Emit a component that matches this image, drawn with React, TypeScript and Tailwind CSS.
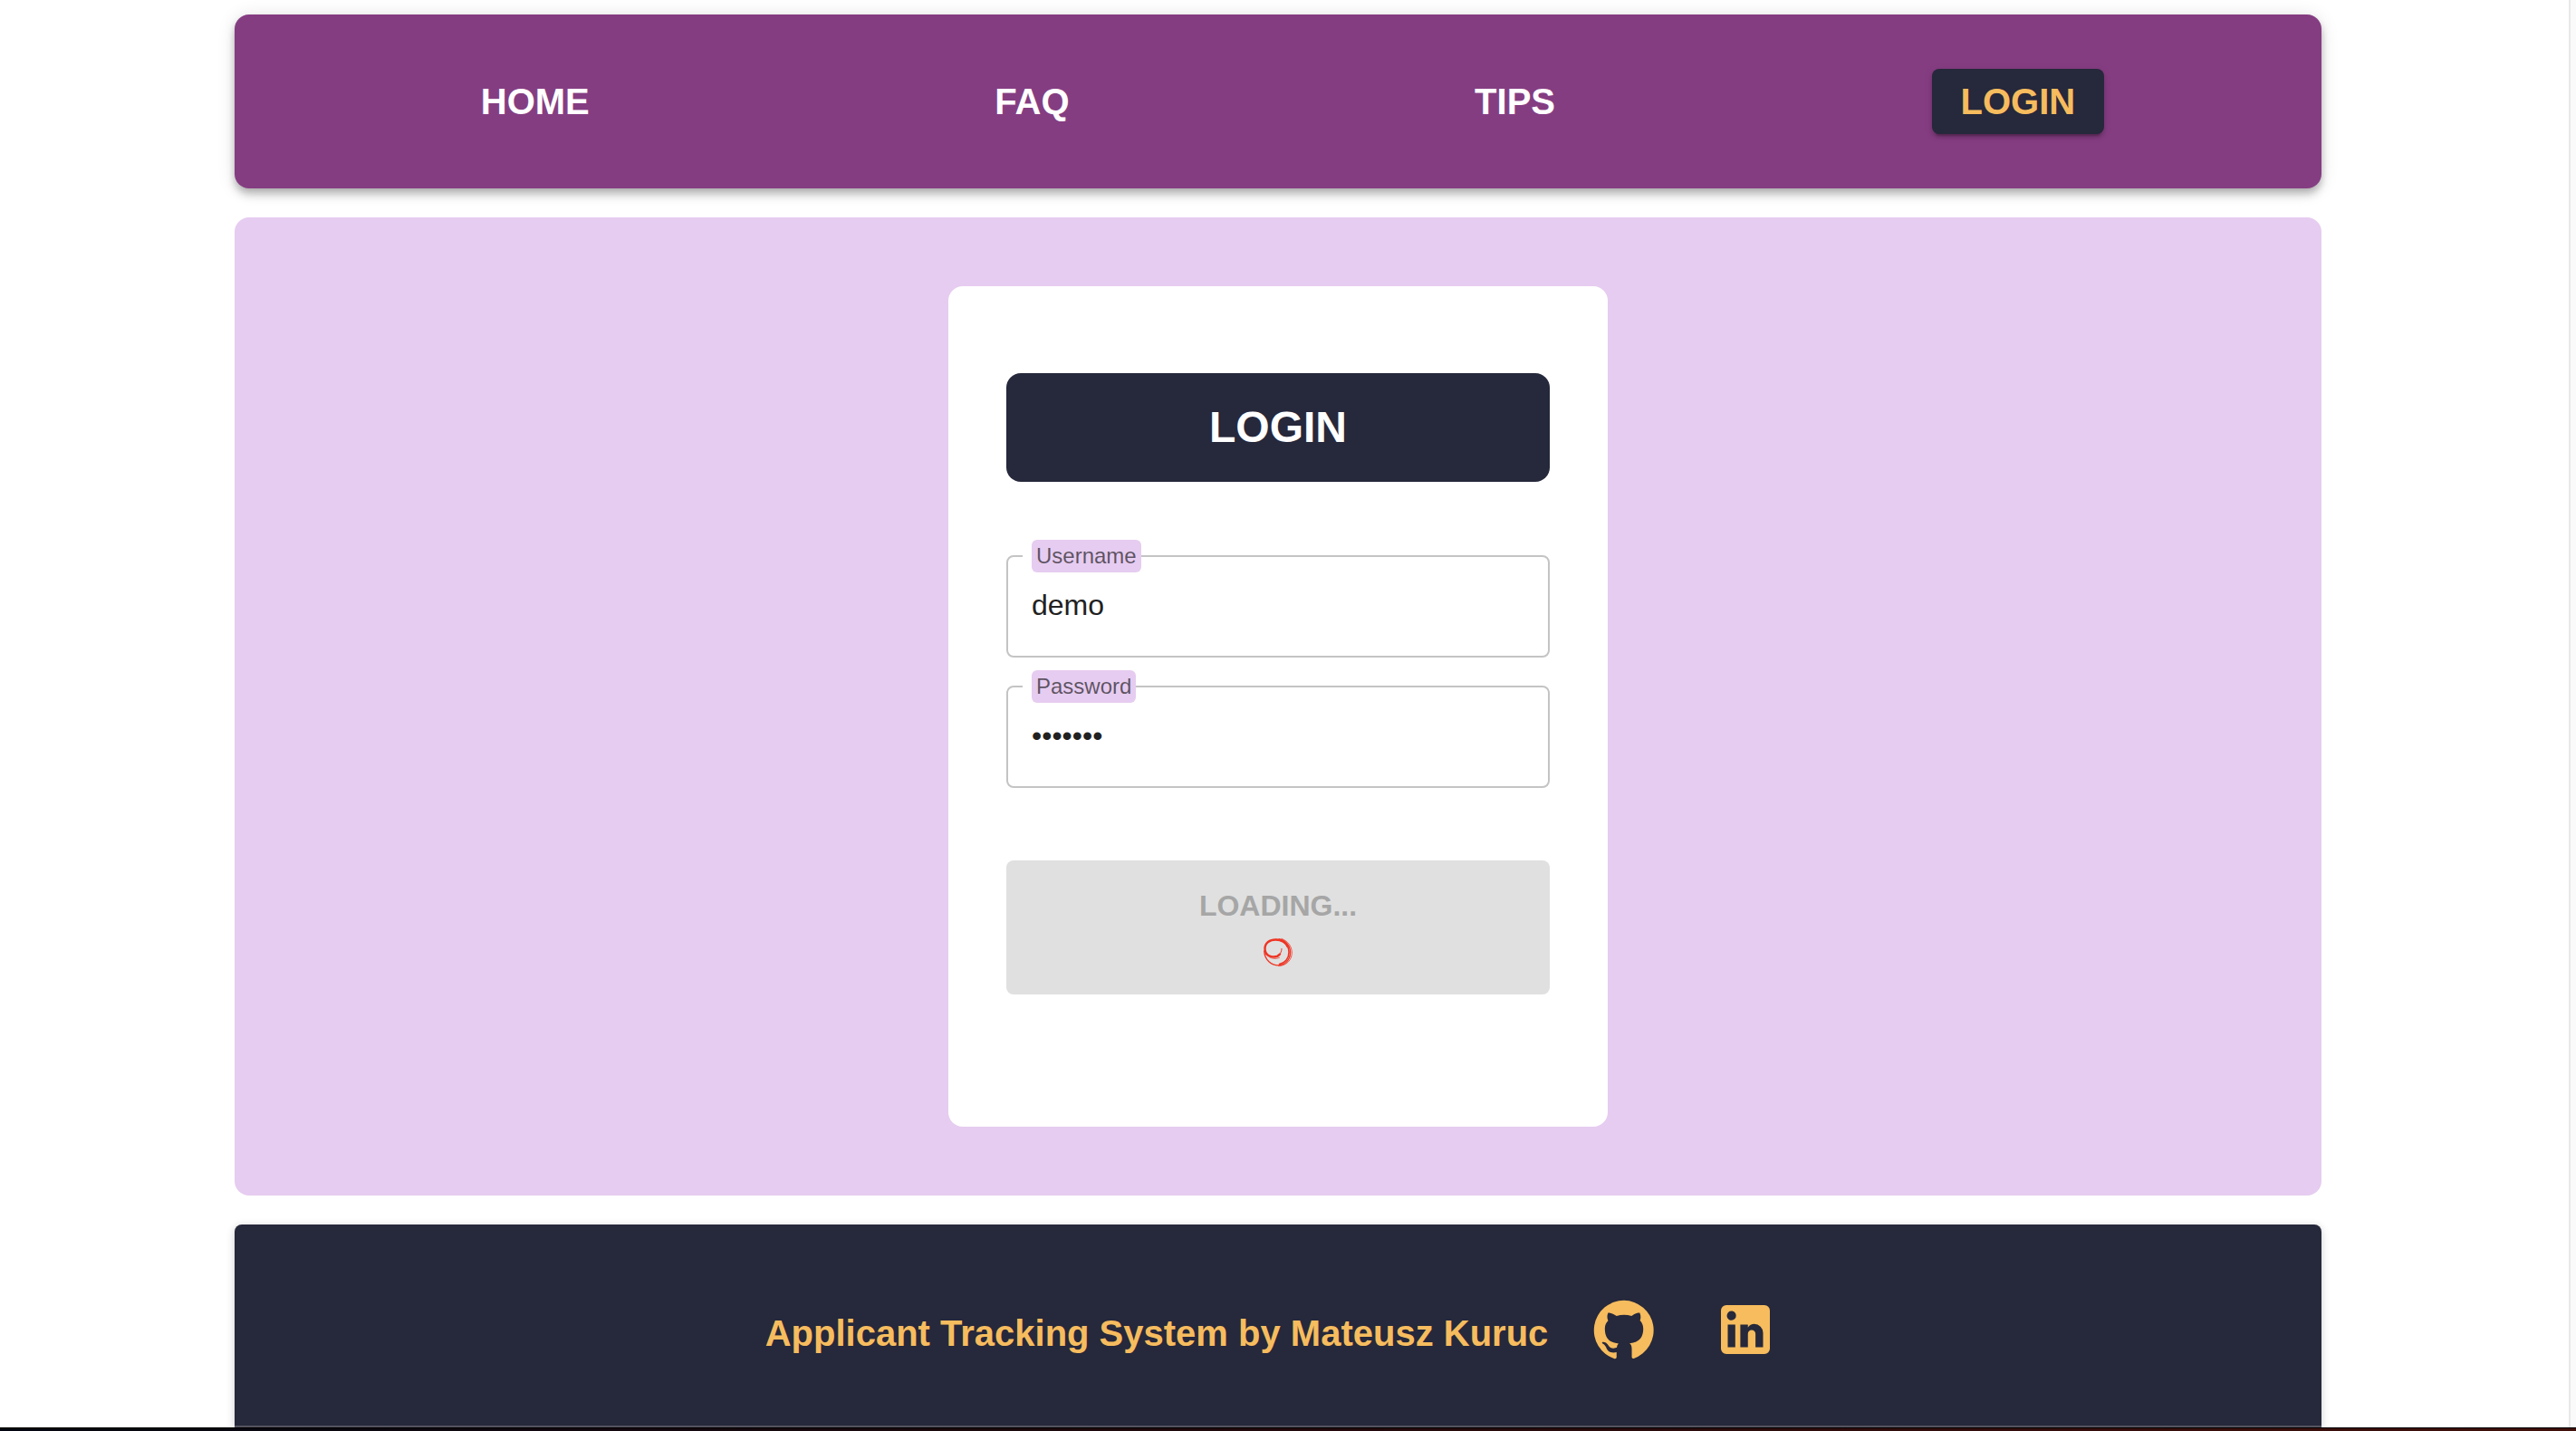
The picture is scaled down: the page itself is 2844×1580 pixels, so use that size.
import React from "react";

const links = ["HOME", "FAQ", "TIPS"];

function GitHubIcon() {
  return (
    <svg viewBox="0 0 24 24" fill="currentColor" className="size-[72px]" aria-hidden="true">
      <path d="M12 1.27a11 11 0 00-3.48 21.46c.55.09.73-.28.73-.55v-1.84c-3.03.64-3.67-1.46-3.67-1.46-.55-1.29-1.28-1.65-1.28-1.65-.92-.65.1-.65.1-.65 1.1 0 1.73 1.1 1.73 1.1.92 1.65 2.57 1.2 3.21.92a2 2 0 01.64-1.47c-2.47-.27-5.04-1.19-5.04-5.5 0-1.1.46-2.1 1.2-2.84a3.76 3.76 0 010-2.93s.91-.28 3.11 1.1c1.8-.49 3.7-.49 5.5 0 2.1-1.38 3.02-1.1 3.02-1.1a3.76 3.76 0 01.1 2.83c.74.74 1.2 1.74 1.2 2.94 0 4.21-2.57 5.13-5.04 5.4.45.37.82.92.82 2.02v3.03c0 .27.1.64.73.55A11 11 0 0012 1.27" />
    </svg>
  );
}

function LinkedInIcon() {
  return (
    <svg viewBox="0 0 24 24" fill="currentColor" className="size-[72px]" aria-hidden="true">
      <path d="M19 3a2 2 0 0 1 2 2v14a2 2 0 0 1-2 2H5a2 2 0 0 1-2-2V5a2 2 0 0 1 2-2h14m-.5 15.5v-5.3a3.26 3.26 0 0 0-3.26-3.26c-.85 0-1.84.52-2.32 1.3v-1.11h-2.79v8.37h2.79v-4.93c0-.77.62-1.4 1.39-1.4a1.4 1.4 0 0 1 1.4 1.4v4.93h2.79M6.88 8.56a1.68 1.68 0 0 0 1.68-1.68c0-.93-.75-1.69-1.68-1.69a1.69 1.69 0 0 0-1.69 1.69c0 .93.76 1.68 1.69 1.68m1.39 9.94v-8.37H5.5v8.37h2.77z" />
    </svg>
  );
}

function Spinner() {
  return (
    <svg viewBox="0 0 48 48" fill="none" stroke="#ee3524" strokeLinecap="round" className="size-12" aria-hidden="true">
      <path d="M28 19.500C28 25 24 28.500 19.500 28.500" strokeWidth="1" />
      <path d="M26 25.500C22 30.500 9.500 29.500 9.500 19.500C9.500 13 15 9.500 21.500 9.500C28 9.500 33 13 34.500 17" strokeWidth="2.400" />
      <path d="M14 28.500Q19.500 32 25.500 29.500" strokeWidth="0.700" />
      <path d="M22 9.500C31 10 36 16 36 23.500C36 30 32 35.500 25.500 36.500" strokeWidth="1.600" />
      <path d="M25 8.800C32 9.500 37.500 16 37.500 23.500C37.500 32 31.500 37.800 24.500 37.800C17 37.800 9 32 8.800 22" strokeWidth="1.300" />
      <path d="M28 8.500C35 11 39.300 17 39.300 24C39.300 31 34 38.500 24.500 38.500" strokeWidth="0.800" />
    </svg>
  );
}

function Field({ id, label, type, value }: { id: string; label: string; type: string; value: string }) {
  return (
    <fieldset className="h-[130px] rounded-lg border-2 border-[#c4c4c4] pl-4">
      <legend className="flex h-9 items-center bg-white pl-2.5">
        <label htmlFor={id} className="rounded-md bg-[#e6ccf0] px-[5px] py-1 text-2xl leading-7 text-black/60">
          {label}
        </label>
      </legend>
      <input
        id={id}
        type={type}
        defaultValue={value}
        className="mt-3 block h-12 w-full bg-transparent pl-2.5 text-[32px] leading-12 text-[#212121] outline-none"
      />
    </fieldset>
  );
}

export default function App() {
  return (
    <div className="flex h-screen flex-col overflow-hidden bg-white font-['Liberation_Sans',Arial,sans-serif]">
      <div className="flex min-h-0 flex-1">
        <div className="min-w-0 flex-1 overflow-hidden pr-3.5">
          <div className="mx-auto flex h-full max-w-[2400px] flex-col gap-8 px-12 pt-4">
            <header className="shrink-0 rounded-2xl bg-[#853d82] shadow-[0_4px_8px_-2px_rgba(0,0,0,0.2),0_8px_10px_0_rgba(0,0,0,0.14),0_2px_20px_0_rgba(0,0,0,0.12)]">
              <nav className="flex h-48 items-center justify-around px-12 text-[40px] leading-[56px] font-bold">
                {links.map((name) => (
                  <a key={name} href="#" className="px-8 py-2 text-white">
                    {name}
                  </a>
                ))}
                <a
                  href="#"
                  className="rounded-lg bg-[#26283b] px-8 py-2 text-[#f6bc5e] shadow-[0_6px_2px_-4px_rgba(0,0,0,0.2),0_4px_4px_0_rgba(0,0,0,0.14),0_2px_10px_0_rgba(0,0,0,0.12)]"
                >
                  LOGIN
                </a>
              </nav>
            </header>

            <main className="flex shrink-0 justify-center rounded-2xl bg-[#e6ccf0] py-[76px]">
              <form className="w-[728px] rounded-2xl bg-white px-16 pt-24 pb-[146px]" onSubmit={(e) => e.preventDefault()}>
                <h1 className="rounded-2xl bg-[#26283b] py-8 text-center text-5xl leading-14 font-bold text-white">LOGIN</h1>
                <div className="mt-16 flex flex-col gap-3.5">
                  <Field id="username" label="Username" type="text" value="demo" />
                  <Field id="password" label="Password" type="password" value="example" />
                </div>
                <button
                  type="submit"
                  disabled
                  className="mt-20 flex h-[148px] w-full flex-col items-center rounded-lg bg-[#e0e0e0] pt-[22px] text-[32px] leading-14 font-bold text-[#a6a6a6]"
                >
                  LOADING...
                  <Spinner />
                </button>
              </form>
            </main>

            <footer className="flex flex-1 items-start justify-center rounded-t-lg border-b-2 border-[#54535f] bg-[#26283b] pt-20 text-[#f6bc5e] shadow-[0_2px_10px_0_rgba(0,0,0,0.2)]">
              <p className="pt-3 text-[40px] leading-14 font-bold">Applicant Tracking System by Mateusz Kuruc</p>
              <a href="#" aria-label="GitHub" className="ml-12">
                <GitHubIcon />
              </a>
              <a href="#" aria-label="LinkedIn" className="mr-3.5 ml-[62px]">
                <LinkedInIcon />
              </a>
            </footer>
          </div>
        </div>
        <div className="w-2 border-l-2 border-[#e8e8e8] bg-[#fafafa]" />
      </div>
      <div className="h-1 border-t border-black bg-linear-to-r from-[#04060f] via-[#22090c] to-[#40100a]" />
    </div>
  );
}
